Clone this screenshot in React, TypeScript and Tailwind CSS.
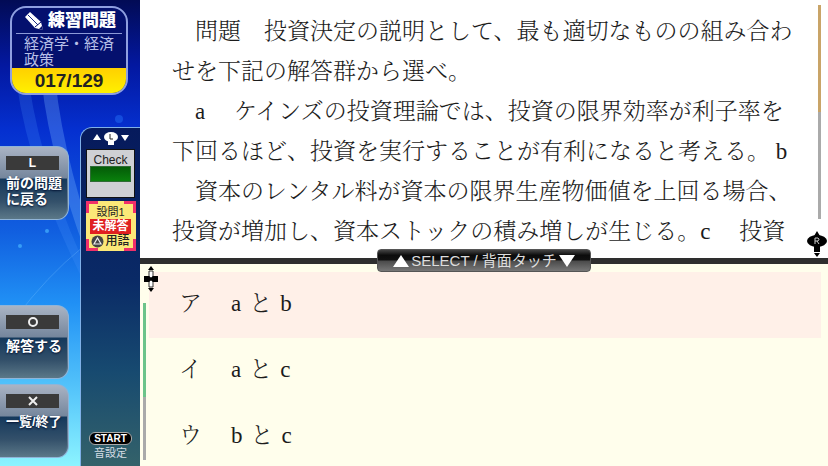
import React, { useState } from 'react';

const QUESTION_LINES = [
  '　問題　投資決定の説明として、最も適切なものの組み合わ',
  'せを下記の解答群から選べ。',
  '　a　 ケインズの投資理論では、投資の限界効率が利子率を',
  '下回るほど、投資を実行することが有利になると考える。 b',
  '　資本のレンタル料が資本の限界生産物価値を上回る場合、',
  '投資が増加し、資本ストックの積み増しが生じる。c　 投資',
];

const ANSWERS = [
  { mark: 'ア', left: 'a', right: 'b' },
  { mark: 'イ', left: 'a', right: 'c' },
  { mark: 'ウ', left: 'b', right: 'c' },
];

function PencilIcon() {
  return (
    <svg width="20" height="20" viewBox="0 0 20 20" className="shrink-0">
      <path d="M1 6 L6 1 L17 11 L19 19 L11 17 Z" fill="#fff" />
      <path d="M4 4 L14 14" stroke="#1a2a80" strokeWidth="1" />
      <path d="M11 16 L17 11" stroke="#06106a" strokeWidth="1" />
      <path d="M15 18 L18 15 L19 19 Z" fill="#06106a" />
    </svg>
  );
}

function BadgeL() {
  return (
    <svg width="36" height="15" viewBox="0 0 36 15">
      <path d="M0 9 L4 3 L8 9 Z M28 4 L36 4 L32 10 Z" fill="#fff" />
      <ellipse cx="18" cy="6" rx="7" ry="5" fill="#fff" />
      <path d="M15 9 H21 V14 H15 Z" fill="#fff" />
      <path d="M17 3 V8 H20" fill="none" stroke="#222" strokeWidth="1" />
    </svg>
  );
}

function StickR() {
  return (
    <svg width="20" height="26" viewBox="0 0 20 26">
      <path d="M10 0 L13 5 H7 Z M10 26 L13 22 H7 Z M7 13 H13 V21 H7 Z" fill="#000" />
      <ellipse cx="10" cy="10" rx="10" ry="6" fill="#000" />
      <path d="M8 13 V7 H11 Q13 8 11 10 H8 M10 10 L12 13" fill="none" stroke="#ccc" strokeWidth="1" />
    </svg>
  );
}

function DPadIcon() {
  return (
    <svg width="14" height="26" viewBox="0 0 14 26">
      <path d="M7 0 L10 4 H4 Z M7 26 L10 22 H4 Z M0 10 H14 V16 H0 Z" fill="#000" />
      <path d="M5 5 H9 V10 L7 12 L5 10 Z M5 21 H9 V16 L7 14 L5 16 Z" fill="#fff" stroke="#333" strokeWidth="1" />
    </svg>
  );
}

function PadButton({ symbol, label }: { symbol: React.ReactNode; label: React.ReactNode }) {
  return (
    <button className="h-[74px] w-[69px] rounded-r-xl border border-l-0 border-[#8fb4d8] bg-linear-to-b from-[#aab4c4] via-[#6d7f96] to-[#526f84] pt-px pr-px text-left">
      <span className="flex h-full flex-col rounded-r-xl bg-[linear-gradient(to_bottom,transparent_42%,#15395c_44%,#33506a_75%,#5b7888_100%)] pt-2 pl-[6px]">
        <span className="flex h-[14px] w-[53px] items-center justify-center bg-[#3a3a3a]">{symbol}</span>
        <span className="mt-[5px] block text-[14px] leading-4 font-bold whitespace-nowrap text-white [text-shadow:0_1px_2px_#001030]">
          {label}
        </span>
      </span>
    </button>
  );
}

function Sidebar() {
  return (
    <aside className="relative flex w-[140px] shrink-0 flex-col bg-[linear-gradient(to_bottom,#020b55_0%,#0318a0_14%,#0530d0_28%,#1160e0_50%,#2090f5_65%,#50c0fa_82%,#8cf4ff_100%)] text-white">
      <svg className="absolute inset-0 h-full w-full" viewBox="0 0 140 466" preserveAspectRatio="none">
        <path d="M14 60 Q24 180 110 330 L118 330 Q40 190 26 60 Z" fill="#4f9cff" opacity="0.2" />
        <path d="M40 60 Q44 150 100 290 L110 290 Q58 150 54 60 Z" fill="#7fb8ff" opacity="0.3" />
        <path d="M0 340 Q60 250 140 210" fill="none" stroke="#7cc4ff" opacity="0.3" />
        <circle cx="119" cy="119" r="4" fill="#2b7cff" opacity="0.4" />
        <circle cx="47" cy="231" r="2" fill="#46b4ff" opacity="0.7" />
        <circle cx="20" cy="246" r="2" fill="#46b4ff" opacity="0.7" />
      </svg>

      <header className="relative mx-[10px] mt-[6px] w-[118px] overflow-hidden rounded-2xl border-2 border-[#8f9fe0] bg-[#04106e]">
        <div className="mx-1 flex h-[26px] items-center gap-1 border-b border-[#8c9ad8] pl-2">
          <PencilIcon />
          <h1 className="text-[17px] leading-5 font-black whitespace-nowrap">練習問題</h1>
        </div>
        <p className="h-[34px] pt-[2px] pl-3 text-[15px] leading-4 text-[#b9c0e8]">
          経済学・経済
          <br />
          政策
        </p>
        <p className="h-[25px] bg-linear-to-b from-[#ffd000] to-[#fff000] text-center text-[19px] leading-[25px] font-bold text-[#222]">
          017/129
        </p>
      </header>

      <div className="relative mt-8 flex flex-1">
        <nav className="flex w-20 flex-col pt-[19px] pb-2">
          <PadButton symbol={<span className="text-[12px] leading-3 font-bold">L</span>} label={<>前の問題<br />に戻る</>} />
          <div className="flex flex-1 flex-col justify-end gap-[5px]">
            <PadButton
              symbol={
                <svg width="12" height="12" viewBox="0 0 12 12">
                  <circle cx="6" cy="6" r="4" fill="none" stroke="#eee" strokeWidth="2" />
                </svg>
              }
              label={<span className="block pt-1">解答する</span>}
            />
            <PadButton
              symbol={
                <svg width="12" height="12" viewBox="0 0 12 12">
                  <path d="M2 2 L10 10 M10 2 L2 10" stroke="#eee" strokeWidth="2" />
                </svg>
              }
              label={<span className="text-[13px]">一覧/終了</span>}
            />
          </div>
        </nav>

        <div className="flex flex-1 flex-col items-center rounded-tl-xl border-t border-l border-[#7fb0e8] bg-[linear-gradient(to_bottom,#061a5c_0%,#0a2a66_45%,#174a70_72%,#34626a_100%)] pt-[3px]">
          <BadgeL />
          <button className="mt-[3px] flex h-[49px] w-[49px] flex-col items-center border border-[#111] bg-[#cfd0d4] pt-1">
            <span className="text-[12px] leading-3 text-[#222]">Check</span>
            <span className="h-[16px] w-[41px] border border-[#2f6b35] bg-linear-to-b from-[#045c08] to-[#0a800c]" />
          </button>
          <button className="relative mt-[3px] flex h-[50px] w-[50px] flex-col items-center bg-[#fbe878] text-[#222]">
            <span className="absolute top-0 left-0 h-3 w-3 border-t-3 border-l-3 border-[#f0306a]" />
            <span className="absolute top-0 right-0 h-3 w-3 border-t-3 border-r-3 border-[#f0306a]" />
            <span className="absolute bottom-0 left-0 h-3 w-3 border-b-3 border-l-3 border-[#f0306a]" />
            <span className="absolute right-0 bottom-0 h-3 w-3 border-r-3 border-b-3 border-[#f0306a]" />
            <span className="relative mt-1 text-[11px] leading-[14px]">設問1</span>
            <span className="relative h-[15px] w-[41px] bg-[#e02020] text-center text-[12px] leading-[15px] font-bold text-white">
              未解答
            </span>
            <span className="relative flex items-center gap-px text-[12px] leading-[15px] font-medium">
              <svg width="13" height="13" viewBox="0 0 13 13">
                <circle cx="6.5" cy="6.5" r="6" fill="#444" />
                <path d="M6.5 3 L10 9 H3 Z" fill="none" stroke="#eee" strokeWidth="1.2" />
              </svg>
              用語
            </span>
          </button>
          <button className="mt-auto mb-1 flex flex-col items-center">
            <span className="h-[13px] rounded-md border border-[#aaa] bg-black px-1 text-[10px] leading-[11px] font-bold">
              START
            </span>
            <span className="text-[11px] leading-[17px] text-[#d5dde4]">音設定</span>
          </button>
        </div>
      </div>
    </aside>
  );
}

export default function App() {
  const [selected, setSelected] = useState(0);

  return (
    <div className="flex h-screen overflow-hidden bg-[#fffeec] font-['Liberation_Sans','Noto_Sans_CJK_JP',sans-serif]">
      <Sidebar />

      <main className="flex min-w-0 flex-1 flex-col font-['Liberation_Serif','Noto_Serif_CJK_JP','Noto_Sans_CJK_JP',serif] text-[23px] text-[#1c1c1c]">
        <section className="flex shrink-0 bg-white">
          <div className="flex-1 pt-3 pb-[6px] pl-8 leading-10 font-light whitespace-pre">
            {QUESTION_LINES.map((line) => (
              <p key={line}>{line}</p>
            ))}
          </div>
          <div className="flex w-[22px] flex-col items-center gap-3 pt-[5px] pb-px">
            <div className="ml-1 w-[3px] flex-1 bg-[#aaa]">
              <div className="h-1/2 bg-[#c9a468]" />
            </div>
            <StickR />
          </div>
        </section>

        <div className="relative z-10 h-[6px] shrink-0 bg-[#2e2e2e]">
          <button className="absolute -top-[9px] left-1/2 flex h-[23px] w-[214px] -translate-x-1/2 items-center justify-center gap-[2px] rounded border border-[#555] bg-[linear-gradient(to_bottom,#444_0%,#0c0c0c_25%,#111_48%,#4a4a4a_52%,#777_100%)] font-['Liberation_Sans','Noto_Sans_CJK_JP',sans-serif] text-[15px] leading-5 whitespace-nowrap text-[#ddd]">
            <svg width="16" height="12" viewBox="0 0 16 12">
              <path d="M8 0 L16 12 H0 Z" fill="#fff" />
            </svg>
            SELECT / 背面タッチ
            <svg width="16" height="12" viewBox="0 0 16 12">
              <path d="M0 0 H16 L8 12 Z" fill="#fff" />
            </svg>
          </button>
        </div>

        <section className="relative flex min-h-0 flex-1">
          <div className="absolute top-[2px] left-1">
            <DPadIcon />
          </div>
          <div className="flex w-[9px] flex-col pt-[39px] pb-[6px] pl-[3px]">
            <div className="w-[3px] flex-1 bg-[#aaa]">
              <div className="h-3/5 bg-[#6cc48a]" />
            </div>
          </div>
          <div className="flex-1 overflow-hidden pt-2 pr-[7px]">
            {ANSWERS.map((answer, i) => (
              <button
                key={answer.mark}
                onClick={() => setSelected(i)}
                className={`flex h-[66px] w-full items-center pb-[2px] pl-[30px] font-light ${i === selected ? 'bg-[#fff0e8]' : ''}`}
              >
                <span className="mr-[29px]">{answer.mark}</span>
                <span className="flex gap-2">
                  <span>{answer.left}</span>
                  <span>と</span>
                  <span>{answer.right}</span>
                </span>
              </button>
            ))}
          </div>
        </section>
      </main>
    </div>
  );
}
